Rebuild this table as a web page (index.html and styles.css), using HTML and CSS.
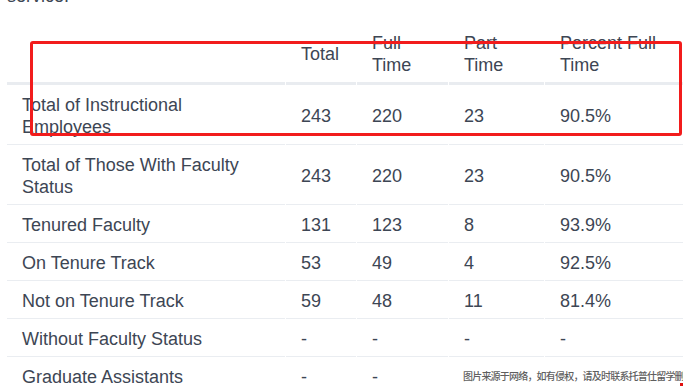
FILE: index.html
```html
<!DOCTYPE html>
<html lang="en">
<head>
<meta charset="utf-8">
<title>Instructional Employees</title>
<link rel="stylesheet" href="styles.css">
</head>
<body>
<div class="page">
  <p class="intro">service.</p>
  <div class="table-wrap">
    <table class="staff">
      <colgroup>
        <col class="c-label">
        <col class="c-total">
        <col class="c-full">
        <col class="c-part">
        <col class="c-pct">
      </colgroup>
      <thead>
        <tr><th></th><th>Total</th><th>Full Time</th><th>Part Time</th><th>Percent Full Time</th></tr>
      </thead>
      <tbody>
        <tr><td>Total of Instructional Employees</td><td>243</td><td>220</td><td>23</td><td>90.5%</td></tr>
        <tr><td>Total of Those With Faculty Status</td><td>243</td><td>220</td><td>23</td><td>90.5%</td></tr>
        <tr><td>Tenured Faculty</td><td>131</td><td>123</td><td>8</td><td>93.9%</td></tr>
        <tr><td>On Tenure Track</td><td>53</td><td>49</td><td>4</td><td>92.5%</td></tr>
        <tr><td>Not on Tenure Track</td><td>59</td><td>48</td><td>11</td><td>81.4%</td></tr>
        <tr><td>Without Faculty Status</td><td>-</td><td>-</td><td>-</td><td>-</td></tr>
        <tr><td>Graduate Assistants</td><td>-</td><td>-</td><td></td><td></td></tr>
      </tbody>
    </table>
  </div>
  <div class="highlight"></div>
  <div class="watermark">图片来源于网络，如有侵权，请及时联系托普仕留学删除</div>
  <div class="red-mark"></div>
</div>
</body>
</html>
```
FILE: styles.css
```css
* { box-sizing: border-box; }
html, body { margin: 0; padding: 0; background: #fff; }
body {
  width: 683px;
  height: 386px;
  overflow: hidden;
  font-family: "Liberation Sans", Arial, sans-serif;
  font-size: 18px;
  color: #3d4654;
}
.page {
  position: relative;
  width: 683px;
  height: 386px;
  overflow: hidden;
}
.intro {
  margin: -15px 0 0 7px;
  line-height: 22px;
  height: 22px;
}
.table-wrap {
  margin-top: 16px;
  width: 683px;
  overflow: hidden;
}
.staff {
  margin-left: 6px;
  width: 690px;
  table-layout: fixed;
  border-collapse: separate;
  border-spacing: 1px 0;
}
.c-label { width: 278px; }
.c-total { width: 70px; }
.c-full { width: 91px; }
.c-part { width: 95px; }
.c-pct { width: 150px; }
.staff th,
.staff td {
  text-align: left;
  vertical-align: middle;
  font-weight: normal;
  line-height: 22px;
  padding: 9px 15px 6px 15px;
  border-bottom: 1px solid #eaedf1;
}
.staff th { border-bottom: 3px solid #e9ecf0; }
.highlight {
  position: absolute;
  left: 30px;
  top: 41px;
  width: 652px;
  height: 95px;
  border: 3px solid #f21c1c;
  border-radius: 3px;
}
.watermark {
  position: absolute;
  left: 462px;
  top: 369px;
  padding: 0 0 0 1px;
  background: #fff;
  color: #5f5f5f;
  font-family: "Noto Sans CJK SC", sans-serif;
  font-size: 10px;
  font-weight: 500;
  letter-spacing: -0.8px;
  line-height: 14px;
  white-space: nowrap;
}
.red-mark {
  position: absolute;
  left: 680px;
  top: 383px;
  width: 3px;
  height: 3px;
  background: #e01010;
}
```
